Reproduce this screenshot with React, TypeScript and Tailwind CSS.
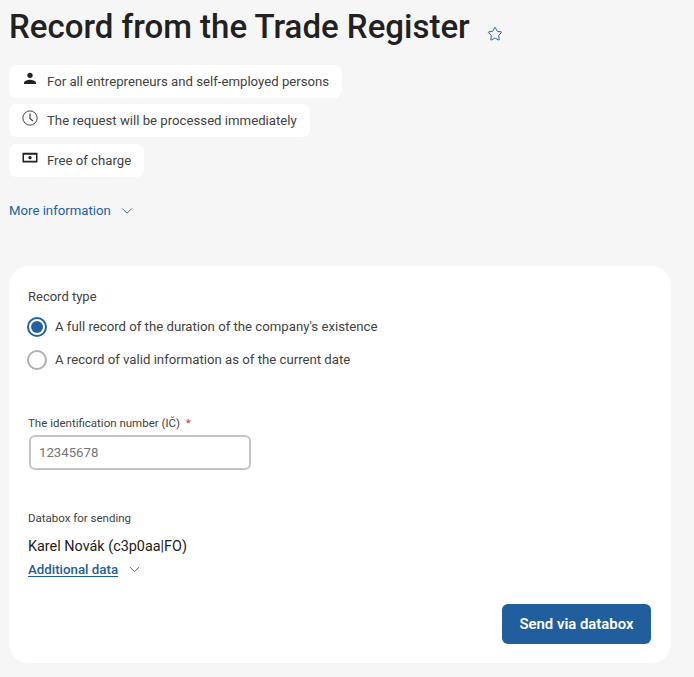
import { ChevronDown, Star } from 'lucide-react'

const facts = [
  {
    text: 'For all entrepreneurs and self-employed persons',
    icon: (
      <svg width="18" height="18" viewBox="0 0 24 24" fill="#212121">
        <circle cx="12" cy="7" r="3.500" />
        <path d="M4 18.500v-1.500c0-2.700 5.300-4 8-4s8 1.300 8 4v1.500z" />
      </svg>
    ),
  },
  {
    text: 'The request will be processed immediately',
    icon: (
      <svg width="18" height="18" viewBox="0 0 24 24" fill="none" stroke="#424242" strokeWidth="1.300">
        <circle cx="12" cy="12" r="9.500" />
        <path d="M12 6v6.500l4 3.500" strokeWidth="1.600" />
      </svg>
    ),
  },
  {
    text: 'Free of charge',
    icon: (
      <svg width="18" height="18" viewBox="0 0 24 24" fill="#212121">
        <path fillRule="evenodd" d="M2 5h20v13H2zM4 7.500v8h16v-8z" />
        <circle cx="12" cy="11.500" r="2.200" />
      </svg>
    ),
  },
]

export default function App() {
  return (
    <div className="h-[677px] overflow-hidden bg-[#f6f6f6] pl-[9px] pr-[23px] font-['Roboto',sans-serif]">
      <div className="flex items-end pt-[7px]">
        <h1 className="text-[33px] leading-[40px] font-medium text-[#212121]">Record from the Trade Register</h1>
        <Star size={16} strokeWidth={1.5} className="mb-[5px] ml-[17px] text-[#2362a2]" />
      </div>

      <div className="mt-[18px] flex flex-col items-start gap-[6px]">
        {facts.map((f, i) => (
          <div key={f.text} className={`flex h-[33px] items-center rounded-[8px] bg-white pr-[13px] pl-[12px] text-[13.200px] text-[#424242] ${i === 2 ? 'mt-[1px]' : ''}`}>
            <span className="mr-[8px] -mt-[5px] w-[18px]">{f.icon}</span>
            {f.text}
          </div>
        ))}
      </div>

      <div className="mt-[25px] flex items-center text-[13.200px] leading-[18px] text-[#2362a2]">
        More information
        <ChevronDown size={18} strokeWidth={1.25} className="ml-[7px]" />
      </div>

      <form className="mt-[46px] h-[397px] rounded-[20px] bg-white pt-[23px] pr-[20px] pl-[19px]">
        <div className="text-[13px] leading-[16px] text-[#424242]">Record type</div>
        <div className="mt-[12px] flex flex-col gap-[13px]">
          <label className="flex h-[20px] items-center text-[13.200px] text-[#424242]">
            <span className="mr-[8px] -ml-[1px] flex size-[20px] items-center justify-center rounded-full border-2 border-[#2362a2]">
              <span className="size-[12px] rounded-full bg-[#2362a2]" />
            </span>
            A full record of the duration of the company's existence
          </label>
          <label className="flex h-[20px] items-center text-[13.200px] text-[#424242]">
            <span className="mr-[8px] -ml-[1px] size-[20px] rounded-full border-2 border-[#b0b0b0]" />
            A record of valid information as of the current date
          </label>
        </div>

        <div className="mt-[45px] text-[11.500px] leading-[16px] text-[#424242]">
          The identification number (IČ) <span className="ml-[3px] text-[#c0392b]">*</span>
        </div>
        <input
          placeholder="12345678"
          className="mt-[4px] ml-[1px] block h-[35px] w-[222px] rounded-[6px] border-2 border-[#c4c4c4] px-[8px] text-[13.200px] placeholder:text-[#757575]"
        />

        <div className="mt-[40px] text-[11.500px] leading-[16px] text-[#424242]">Databox for sending</div>
        <div className="mt-[11px] text-[14.400px] leading-[20px] text-[#212121]">Karel Novák (c3p0aa|FO)</div>
        <div className="mt-[4px] flex items-center text-[13.300px] leading-[18px]">
          <span className="font-medium text-[#1f5c9c] underline underline-offset-2">Additional data</span>
          <ChevronDown size={17} strokeWidth={1.25} className="ml-[8px] -mt-[2px] text-[#2362a2]" />
        </div>

        <div className="mt-[25px] flex justify-end">
          <button type="button" className="h-[40px] w-[149px] rounded-[6px] bg-[#205e9e] text-[14.900px] font-semibold text-white">
            Send via databox
          </button>
        </div>
      </form>
    </div>
  )
}
